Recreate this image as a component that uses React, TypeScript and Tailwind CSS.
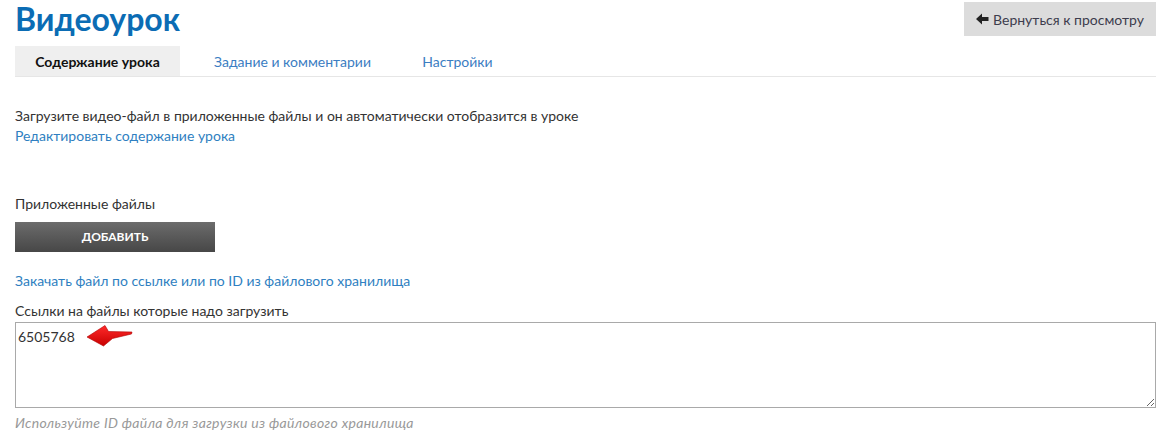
import React from "react";

function RedArrow() {
  return (
    <svg width="52" height="26" viewBox="0 0 52 26" className="absolute left-[84px] top-[323px]">
      <defs>
        <linearGradient id="ra" x1="0" y1="0" x2="0" y2="1">
          <stop offset="0" stopColor="#ff2a2a" />
          <stop offset="1" stopColor="#c80000" />
        </linearGradient>
      </defs>
      <path d="M3 14 L21 2.5 L24.5 8.5 L48 9 L47.5 11 L28.5 15.5 L19.5 23 Z" fill="url(#ra)" stroke="#b00000" strokeWidth="0.6" strokeLinejoin="round" />
    </svg>
  );
}

const font = { fontFamily: 'Lato, "Open Sans", "Liberation Sans", sans-serif' };

export default function App() {
  return (
    <div className="relative w-[1156px] h-[440px] bg-white overflow-hidden text-[14px] text-[#333]" style={font}>
      <div className="flex justify-between items-start">
        <h1 className="ml-[15px] text-[32px] leading-[38px] font-bold text-[#0b6cb4]">Видеоурок</h1>
        <button className="mt-[2px] h-[34px] w-[192px] bg-[#dcdcdc] flex items-center justify-center gap-[4px] text-[14px] text-[#3d3d4d]">
          <svg width="13" height="12" viewBox="0 0 13 12"><path d="M0 6 L6 0.5 L6 4 L12.5 4 L12.5 8 L6 8 L6 11.5 Z" fill="#222" /></svg>
          Вернуться к просмотру
        </button>
      </div>
      <div className="ml-[15px] mt-[8px] flex border-b border-[#e6e6e6]">
        <div className="w-[165px] h-[30px] bg-[#efefef] flex items-center justify-center font-bold text-[14px] text-[#111]">Содержание урока</div>
        <div className="w-[225px] h-[30px] flex items-center justify-center text-[14px] text-[#3b7dc2]">Задание и комментарии</div>
        <div className="w-[105px] h-[30px] flex items-center justify-center text-[14px] text-[#3b7dc2]">Настройки</div>
      </div>
      <div className="ml-[15px] mt-[29px] leading-[20px]">
        <div>Загрузите видео-файл в приложенные файлы и он автоматически отобразится в уроке</div>
        <div className="text-[#2f7fc1]">Редактировать содержание урока</div>
      </div>
      <div className="ml-[15px] mt-[48px] leading-[20px]">Приложенные файлы</div>
      <button className="ml-[15px] mt-[8px] w-[200px] h-[30px] bg-gradient-to-b from-[#6c6c6c] to-[#474747] text-white font-bold text-[12px] flex items-center justify-center">ДОБАВИТЬ</button>
      <div className="ml-[15px] mt-[19px] leading-[20px] text-[#2f7fc1]">Закачать файл по ссылке или по ID из файлового хранилища</div>
      <div className="ml-[15px] mt-[10px] leading-[20px]">Ссылки на файлы которые надо загрузить</div>
      <textarea defaultValue="6505768" className="block ml-[15px] mt-[1px] w-[1141px] h-[86px] border border-[#a9a9a9] px-[2px] py-[3px] text-[14px] text-[#333] resize-y outline-none" style={font} />
      <div className="ml-[15px] mt-[5px] leading-[20px] italic tracking-[0.3px] text-[#999]">Используйте ID файла для загрузки из файлового хранилища</div>
      <RedArrow />
    </div>
  );
}
